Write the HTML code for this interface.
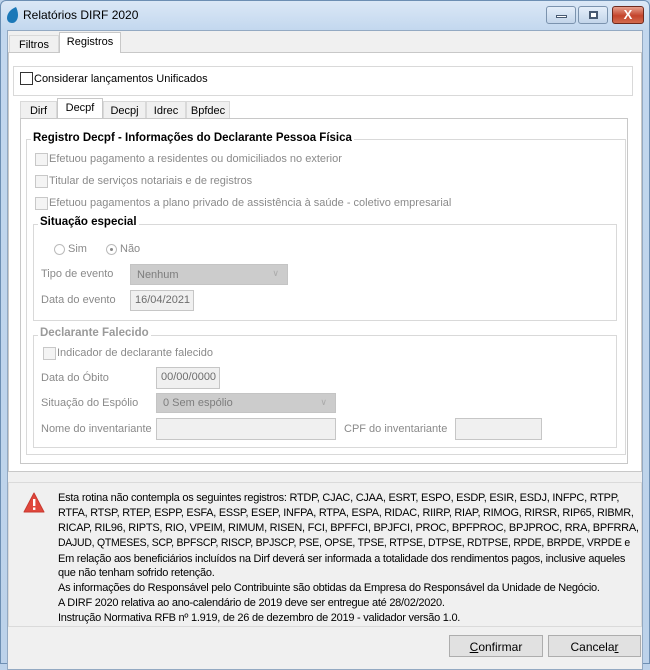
<!DOCTYPE html>
<html><head><meta charset="utf-8">
<style>
*{box-sizing:border-box;margin:0;padding:0}
body{width:650px;height:664px;overflow:hidden;background:#bcd2ea;font-family:"Liberation Sans",sans-serif;font-size:11px;color:#000;position:relative}
.a{position:absolute;white-space:nowrap}
.win{position:absolute;left:0;top:0;width:650px;height:664px;background:linear-gradient(#dbe8f6,#c2d7ee 30px,#bcd2ea);border:1px solid #6d8fb3;border-radius:6px 6px 0 0}
.client{position:absolute;left:7px;top:30px;width:636px;height:640px;background:#f0f0f0;border:1px solid #93a9c2}
.box{position:absolute;border:1px solid #d9d9d9}
.cb{position:absolute;width:13px;height:13px;border:1px solid #c8c8c8;background:#f4f4f4}
.g{color:#8a8a8a}
.in{position:absolute;border:1px solid #c6c6c6;background:#f0f0f0;color:#6d6d6d;padding:3px 0 0 4px}
.sel{position:absolute;background:#cccccc;border:1px solid #c4c4c4;color:#7d7d7d;padding:4px 0 0 6px}
.tab{position:absolute;border:1px solid #d9d9d9;border-bottom:none;background:#f0f0f0;text-align:center;padding-top:3px}
.btn{position:absolute;border:1px solid #adadad;background:#e1e1e1;text-align:center;padding-top:4px;font-size:12px}
.msg div{position:absolute;left:58px;white-space:nowrap;font-size:11px;letter-spacing:-0.25px;transform-origin:0 0}
</style></head><body>
<div class="win"></div>
<svg class="a" style="left:5px;top:6px" width="14" height="18" viewBox="0 0 14 18"><path d="M11 1 C6 3 2 7 2 12 C2 15 4 17 7 17 C11 17 13 13 13 9 C13 6 12 3 11 1Z" fill="#1b78b8"/></svg>
<div class="a" style="left:23px;top:8px;font-size:12px">Relatórios DIRF 2020</div>
<div class="a" style="left:546px;top:6px;width:30px;height:18px;border:1px solid #7b93ae;border-radius:3px;background:linear-gradient(#e4eef9,#c3d5ea)"><div style="position:absolute;left:9px;top:8px;width:11px;height:3px;background:#fff;border:1px solid #485a72"></div></div>
<div class="a" style="left:578px;top:6px;width:30px;height:18px;border:1px solid #7b93ae;border-radius:3px;background:linear-gradient(#e4eef9,#c3d5ea)"><div style="position:absolute;left:10px;top:4px;width:9px;height:8px;border:2px solid #485a72;background:#fff"></div></div>
<div class="a" style="left:612px;top:6px;width:32px;height:18px;border:1px solid #6e2a1e;border-radius:3px;background:linear-gradient(#e7a08d,#c4442c 55%,#d26b4f);color:#fff;font-weight:bold;font-size:13px;text-align:center;line-height:16px">X</div>
<div class="client"></div>
<div class="tab" style="left:9px;top:35px;width:50px;height:18px">Filtros</div>
<div class="tab" style="left:59px;top:32px;width:62px;height:21px;background:#fff;border-color:#c8c8c8">Registros</div>
<div class="box" style="left:8px;top:52px;width:634px;height:420px;background:#fff;border-color:#c8c8c8"></div>
<div class="tab" style="left:60px;top:51px;width:60px;height:3px;background:#fff;border:none"></div>
<div class="box" style="left:13px;top:66px;width:620px;height:30px;background:#fff"></div>
<div class="cb" style="left:20px;top:72px;border-color:#333;background:#fff"></div>
<div class="a" style="left:34px;top:73px">Considerar lançamentos Unificados</div>
<div class="tab" style="left:20px;top:101px;width:37px;height:18px">Dirf</div>
<div class="tab" style="left:57px;top:98px;width:46px;height:21px;background:#fff;border-color:#c8c8c8">Decpf</div>
<div class="tab" style="left:103px;top:101px;width:43px;height:18px">Decpj</div>
<div class="tab" style="left:146px;top:101px;width:40px;height:18px">Idrec</div>
<div class="tab" style="left:186px;top:101px;width:44px;height:18px">Bpfdec</div>
<div class="box" style="left:20px;top:118px;width:608px;height:346px;border-color:#c8c8c8"></div>
<div class="box" style="left:26px;top:139px;width:600px;height:316px"></div>
<div class="a" style="left:31px;top:132px;background:#fff;padding:0 2px;font-weight:bold;font-size:11.5px">Registro Decpf - Informações do Declarante Pessoa Física</div>
<div class="cb" style="left:35px;top:153px"></div><div class="a g" style="left:49px;top:153px">Efetuou pagamento a residentes ou domiciliados no exterior</div>
<div class="cb" style="left:35px;top:175px"></div><div class="a g" style="left:49px;top:175px">Titular de serviços notariais e de registros</div>
<div class="cb" style="left:35px;top:197px"></div><div class="a g" style="left:49px;top:197px">Efetuou pagamentos a plano privado de assistência à saúde - coletivo empresarial</div>
<div class="box" style="left:33px;top:224px;width:584px;height:97px"></div>
<div class="a" style="left:38px;top:216px;background:#fff;padding:0 2px;font-weight:bold;font-size:11.5px">Situação especial</div>
<div class="a" style="left:54px;top:244px;width:11px;height:11px;border:1px solid #bbb;border-radius:50%"></div>
<div class="a g" style="left:68px;top:243px">Sim</div>
<div class="a" style="left:106px;top:244px;width:11px;height:11px;border:1px solid #bbb;border-radius:50%"><div style="position:absolute;left:3px;top:3px;width:3px;height:3px;background:#888;border-radius:50%"></div></div>
<div class="a g" style="left:120px;top:243px">Não</div>
<div class="a g" style="left:41px;top:268px">Tipo de evento</div>
<div class="sel" style="left:130px;top:264px;width:158px;height:21px">Nenhum<span style="position:absolute;right:8px;top:3px;color:#aaa;font-size:9px">∨</span></div>
<div class="a g" style="left:41px;top:294px">Data do evento</div>
<div class="in" style="left:130px;top:290px;width:64px;height:21px">16/04/2021</div>
<div class="box" style="left:33px;top:335px;width:584px;height:113px"></div>
<div class="a g" style="left:38px;top:327px;background:#fff;padding:0 2px;font-weight:bold;font-size:11.5px;color:#9a9a9a">Declarante Falecido</div>
<div class="cb" style="left:43px;top:347px"></div><div class="a g" style="left:57px;top:347px">Indicador de declarante falecido</div>
<div class="a g" style="left:41px;top:372px">Data do Óbito</div>
<div class="in" style="left:156px;top:367px;width:64px;height:22px">00/00/0000</div>
<div class="a g" style="left:41px;top:397px">Situação do Espólio</div>
<div class="sel" style="left:156px;top:393px;width:180px;height:20px;padding-top:3px">0 Sem espólio<span style="position:absolute;right:8px;top:3px;color:#aaa;font-size:9px">∨</span></div>
<div class="a g" style="left:41px;top:423px">Nome do inventariante</div>
<div class="in" style="left:156px;top:418px;width:180px;height:22px"></div>
<div class="a g" style="left:344px;top:423px">CPF do inventariante</div>
<div class="in" style="left:455px;top:418px;width:87px;height:22px"></div>
<div class="box" style="left:8px;top:482px;width:634px;height:145px;background:#f0f0f0;border-color:#dadada"></div>
<svg class="a" style="left:23px;top:492px" width="22" height="22" viewBox="0 0 22 22"><path d="M11 1 L21 20 L1 20 Z" fill="#e0473c" stroke="#c83a30" stroke-linejoin="round"/><rect x="10" y="7" width="2.4" height="7" fill="#fff"/><rect x="10" y="15.5" width="2.4" height="2.4" fill="#fff"/></svg>
<div class="msg">
<div style="top:492px">Esta rotina não contempla os seguintes registros: RTDP, CJAC, CJAA, ESRT, ESPO, ESDP, ESIR, ESDJ, INFPC, RTPP,</div>
<div style="top:507px;transform:scaleX(0.99)">RTFA, RTSP, RTEP, ESPP, ESFA, ESSP, ESEP, INFPA, RTPA, ESPA, RIDAC, RIIRP, RIAP, RIMOG, RIRSR, RIP65, RIBMR,</div>
<div style="top:522px">RICAP, RIL96, RIPTS, RIO, VPEIM, RIMUM, RISEN, FCI, BPFFCI, BPJFCI, PROC, BPFPROC, BPJPROC, RRA, BPFRRA,</div>
<div style="top:537px;transform:scaleX(0.95)">DAJUD, QTMESES, SCP, BPFSCP, RISCP, BPJSCP, PSE, OPSE, TPSE, RTPSE, DTPSE, RDTPSE, RPDE, BRPDE, VRPDE e</div>
<div style="top:553px">Em relação aos beneficiários incluídos na Dirf deverá ser informada a totalidade dos rendimentos pagos, inclusive aqueles</div>
<div style="top:567px">que não tenham sofrido retenção.</div>
<div style="top:582px">As informações do Responsável pelo Contribuinte são obtidas da Empresa do Responsável da Unidade de Negócio.</div>
<div style="top:597px">A DIRF 2020 relativa ao ano-calendário de 2019 deve ser entregue até 28/02/2020.</div>
<div style="top:612px">Instrução Normativa RFB nº 1.919, de 26 de dezembro de 2019 - validador versão 1.0.</div>
</div>
<div class="btn" style="left:449px;top:635px;width:94px;height:22px"><u>C</u>onfirmar</div>
<div class="btn" style="left:548px;top:635px;width:93px;height:22px">Cancela<u>r</u></div>
</body></html>
